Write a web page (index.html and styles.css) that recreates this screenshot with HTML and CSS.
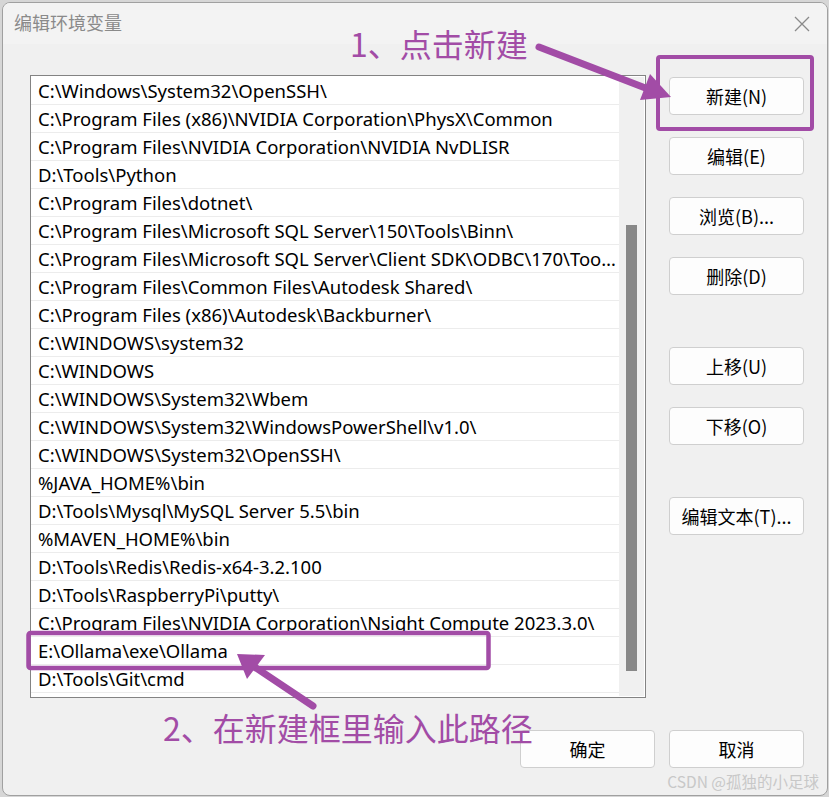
FILE: index.html
```html
<!DOCTYPE html>
<html lang="zh-CN">
<head>
<meta charset="utf-8">
<title>编辑环境变量</title>
<link rel="stylesheet" href="styles.css">
</head>
<body>
<div class="window">
  <div class="titlebar">
    <span class="title">编辑环境变量</span>
    <svg class="close" width="16" height="16" viewBox="0 0 16 16"><path d="M1 1 L15 15 M15 1 L1 15" stroke="#8a8a8a" stroke-width="1.3" fill="none"/></svg>
  </div>
  <div class="main">
    <div class="list">
      <div class="rows">
        <div class="row">C:\Windows\System32\OpenSSH\</div>
        <div class="row">C:\Program Files (x86)\NVIDIA Corporation\PhysX\Common</div>
        <div class="row">C:\Program Files\NVIDIA Corporation\NVIDIA NvDLISR</div>
        <div class="row">D:\Tools\Python</div>
        <div class="row">C:\Program Files\dotnet\</div>
        <div class="row">C:\Program Files\Microsoft SQL Server\150\Tools\Binn\</div>
        <div class="row">C:\Program Files\Microsoft SQL Server\Client SDK\ODBC\170\Too…</div>
        <div class="row">C:\Program Files\Common Files\Autodesk Shared\</div>
        <div class="row">C:\Program Files (x86)\Autodesk\Backburner\</div>
        <div class="row">C:\WINDOWS\system32</div>
        <div class="row">C:\WINDOWS</div>
        <div class="row">C:\WINDOWS\System32\Wbem</div>
        <div class="row">C:\WINDOWS\System32\WindowsPowerShell\v1.0\</div>
        <div class="row">C:\WINDOWS\System32\OpenSSH\</div>
        <div class="row">%JAVA_HOME%\bin</div>
        <div class="row">D:\Tools\Mysql\MySQL Server 5.5\bin</div>
        <div class="row">%MAVEN_HOME%\bin</div>
        <div class="row">D:\Tools\Redis\Redis-x64-3.2.100</div>
        <div class="row">D:\Tools\RaspberryPi\putty\</div>
        <div class="row">C:\Program Files\NVIDIA Corporation\Nsight Compute 2023.3.0\</div>
        <div class="row">E:\Ollama\exe\Ollama</div>
        <div class="row">D:\Tools\Git\cmd</div>
      </div>
      <div class="scrollbar"><div class="thumb"></div></div>
    </div>
    <div class="side">
      <div class="group">
        <button class="btn">新建(N)</button>
        <button class="btn">编辑(E)</button>
        <button class="btn">浏览(B)...</button>
        <button class="btn">删除(D)</button>
      </div>
      <div class="group">
        <button class="btn">上移(U)</button>
        <button class="btn">下移(O)</button>
      </div>
      <div class="group">
        <button class="btn">编辑文本(T)...</button>
      </div>
    </div>
  </div>
  <div class="footer">
    <button class="btn">确定</button>
    <button class="btn">取消</button>
  </div>
  <div class="watermark">CSDN @孤独的小足球</div>
</div>

<div class="note note1">1、点击新建</div>
<div class="note note2">2、在新建框里输入此路径</div>
<svg class="overlay" width="829" height="797" viewBox="0 0 829 797">
  <rect x="658" y="57" width="154" height="72" rx="2" fill="none" stroke="#a24ca6" stroke-width="4"/>
  <rect x="28.5" y="633" width="460" height="35" rx="2" fill="none" stroke="#a24ca6" stroke-width="4.5"/>
  <line x1="539" y1="47" x2="648" y2="89" stroke="#a24ca6" stroke-width="7" stroke-linecap="round"/>
  <polygon points="671,97 640,100 650,74" fill="#a24ca6"/>
  <line x1="313" y1="706" x2="253" y2="666" stroke="#a24ca6" stroke-width="7" stroke-linecap="round"/>
  <polygon points="237,654 247,679 265,655" fill="#a24ca6"/>
</svg>
</body>
</html>
```

FILE: styles.css
```css
html, body {
  margin: 0;
  padding: 0;
}
body {
  width: 829px;
  height: 797px;
  background: #d6d6d6;
  position: relative;
  overflow: hidden;
  font-family: "Noto Sans", "Noto Sans CJK SC", sans-serif;
}
.window {
  margin: 2px 0 0 2px;
  width: 826px;
  height: 794px;
  box-sizing: border-box;
  border: 1px solid #a0a0a0;
  border-radius: 8px;
  background: #f0f0f0;
  position: relative;
  overflow: hidden;
  display: flex;
  flex-direction: column;
}
.titlebar {
  height: 41px;
  box-sizing: border-box;
  background: #f3f3f3;
  display: flex;
  align-items: center;
  justify-content: space-between;
  padding: 0 17px 3px 11px;
  flex: none;
}
.title {
  font-family: "Noto Sans CJK SC", sans-serif;
  font-size: 18px;
  color: #8a8a8a;
  line-height: 1;
}
.close {
  display: block;
  margin-top: 3px;
}
.main {
  display: flex;
  padding: 31px 21px 0 27px;
  gap: 23px;
  align-items: flex-start;
}
.list {
  width: 616px;
  height: 623px;
  box-sizing: border-box;
  border: 1px solid #838383;
  background: #ffffff;
  display: flex;
  padding: 1px 1px 1px 0;
}
.rows {
  flex: 1;
  overflow: hidden;
}
.row {
  height: 28px;
  box-sizing: border-box;
  border-bottom: 1px solid #ececec;
  padding: 0 0 0 7px;
  font-family: "Noto Sans", "Noto Sans CJK SC", sans-serif;
  font-size: 18.5px;
  line-height: 27px;
  color: #000;
  white-space: nowrap;
  overflow: hidden;
}
.scrollbar {
  width: 25px;
  background: #f0f0f0;
  flex: none;
}
.thumb {
  width: 11px;
  height: 446px;
  margin: 148px 0 0 7px;
  background: #888888;
}
.side {
  display: flex;
  flex-direction: column;
  gap: 52px;
  padding-top: 2px;
}
.group {
  display: flex;
  flex-direction: column;
  gap: 22px;
}
.btn {
  width: 135px;
  height: 38px;
  box-sizing: border-box;
  border: 1px solid #cfcfcf;
  border-radius: 4px;
  background: #fdfdfd;
  font-family: "Noto Sans CJK SC", sans-serif;
  font-size: 18px;
  color: #000;
  padding: 0;
  line-height: 1;
}
.footer {
  display: flex;
  justify-content: flex-end;
  gap: 14px;
  padding: 32px 23px 0 0;
}
.watermark {
  position: absolute;
  right: 8px;
  bottom: 6px;
  font-family: "Noto Sans CJK SC", sans-serif;
  font-size: 15.5px;
  color: #c8c8c8;
  line-height: 1;
}
.note {
  position: absolute;
  font-family: "Noto Sans CJK SC", sans-serif;
  font-size: 32px;
  line-height: 1;
  color: #a24ca6;
  white-space: nowrap;
}
.note1 {
  left: 350px;
  top: 27px;
}
.note2 {
  left: 163px;
  top: 711px;
}
.overlay {
  position: absolute;
  left: 0;
  top: 0;
  pointer-events: none;
}
```
